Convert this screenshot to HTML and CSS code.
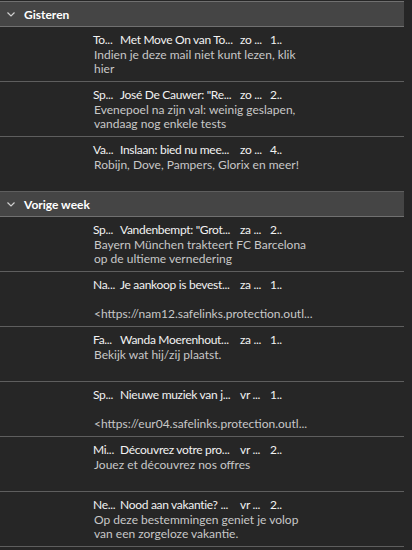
FILE: index.html
```html
<!DOCTYPE html>
<html lang="nl">
<head>
  <meta charset="UTF-8" />
  <meta name="viewport" content="width=device-width, initial-scale=1.0"/>
  <title>Postvak IN</title>
  <link rel="stylesheet" href="styles.css">
</head>
<body>
  <div class="mail-list">
    <div class="group-header">
      <svg class="chevron" width="8" height="5" viewBox="0 0 8 5"><path d="M0.5 0.5 L4 4 L7.5 0.5" fill="none" stroke="#d0d0d0" stroke-width="1.2"/></svg>
      <span>Gisteren</span>
    </div>
    <div class="mail-row">
      <div class="mail-head"><span>To...</span><span>Met Move On van To...</span><span>zo ...</span><span>1..</span></div>
      <div class="preview">Indien je deze mail niet kunt lezen, klik hier</div>
    </div>
    <div class="mail-row">
      <div class="mail-head"><span>Sp...</span><span>José De Cauwer: "Re...</span><span>zo ...</span><span>2..</span></div>
      <div class="preview">Evenepoel na zijn val: weinig geslapen, vandaag nog enkele tests</div>
    </div>
    <div class="mail-row">
      <div class="mail-head"><span>Va...</span><span>Inslaan: bied nu mee...</span><span>zo ...</span><span>4..</span></div>
      <div class="preview">Robijn, Dove, Pampers, Glorix en meer!</div>
    </div>

    <div class="group-header">
      <svg class="chevron" width="8" height="5" viewBox="0 0 8 5"><path d="M0.5 0.5 L4 4 L7.5 0.5" fill="none" stroke="#d0d0d0" stroke-width="1.2"/></svg>
      <span>Vorige week</span>
    </div>
    <div class="mail-row">
      <div class="mail-head"><span>Sp...</span><span>Vandenbempt: "Grot...</span><span>za ...</span><span>2..</span></div>
      <div class="preview">Bayern München trakteert FC Barcelona op de ultieme vernedering</div>
    </div>
    <div class="mail-row">
      <div class="mail-head"><span>Na...</span><span>Je aankoop is bevest...</span><span>za ...</span><span>1..</span></div>
      <div class="preview"><br>&lt;https://nam12.safelinks.protection.outl...</div>
    </div>
    <div class="mail-row">
      <div class="mail-head"><span>Fa...</span><span>Wanda Moerenhout...</span><span>za ...</span><span>1..</span></div>
      <div class="preview">Bekijk wat hij/zij plaatst.</div>
    </div>
    <div class="mail-row">
      <div class="mail-head"><span>Sp...</span><span>Nieuwe muziek van j...</span><span>vr ...</span><span>1..</span></div>
      <div class="preview"><br>&lt;https://eur04.safelinks.protection.outl...</div>
    </div>
    <div class="mail-row">
      <div class="mail-head"><span>Mi...</span><span>Découvrez votre pro...</span><span>vr ...</span><span>2..</span></div>
      <div class="preview">Jouez et découvrez nos offres</div>
    </div>
    <div class="mail-row">
      <div class="mail-head"><span>Ne...</span><span>Nood aan vakantie? ...</span><span>vr ...</span><span>2..</span></div>
      <div class="preview">Op deze bestemmingen geniet je volop van een zorgeloze vakantie.</div>
    </div>
  </div>
</body>
</html>
```

FILE: styles.css
```css
body {
  margin: 0;
  background-color: #262626;
  font-family: Lato, "Noto Sans", sans-serif;
  font-size: 12px;
  color: #f2f2f2;
}
.mail-list {
  width: 404px;
  padding-top: 1px;
}
.group-header {
  display: flex;
  align-items: center;
  gap: 9px;
  height: 24px;
  padding-left: 7px;
  background-color: #454545;
  border-bottom: 1px solid #707070;
  font-weight: bold;
  color: #ffffff;
}
.group-header:first-child {
  border-top: 1px solid #707070;
}
.chevron {
  display: block;
}
.mail-row {
  height: 48px;
  padding: 6px 0 0 93px;
  border-bottom: 1px solid #5e5e5e;
}
.mail-head {
  display: grid;
  grid-template-columns: 27px 120px 30px auto;
  line-height: 14px;
  letter-spacing: -0.3px;
  white-space: nowrap;
}
.preview {
  width: 218px;
  margin-top: 1px;
  padding-left: 1px;
  line-height: 13.5px;
  color: #c8c8c8;
}
```
